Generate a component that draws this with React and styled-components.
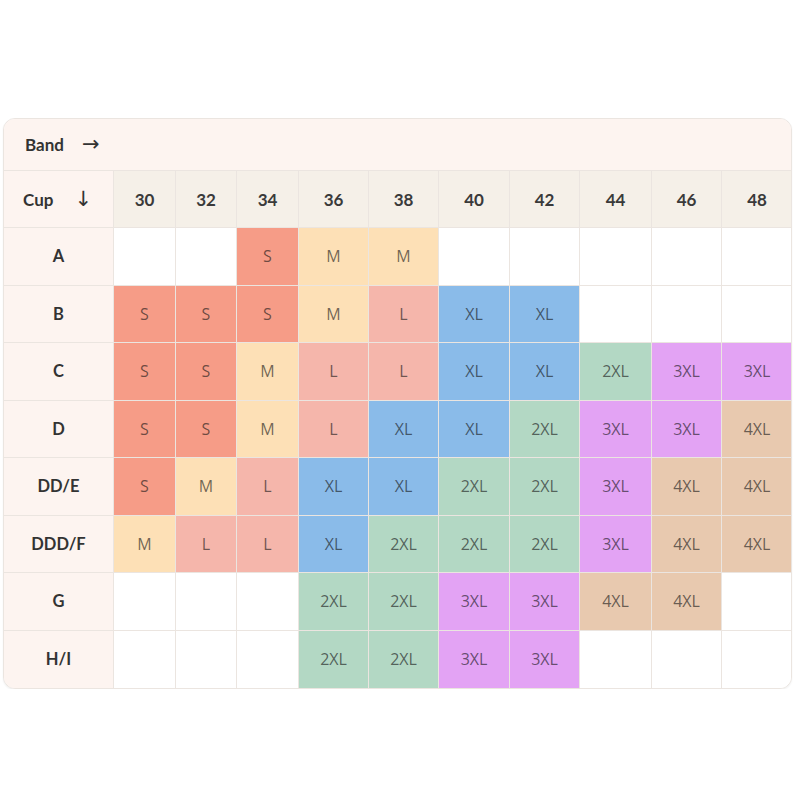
import React from "react";
import styled, { createGlobalStyle } from "styled-components";

const Global = createGlobalStyle`
  html, body { margin: 0; padding: 0; background: #ffffff; }
  body { font-family: Lato, "Open Sans", sans-serif; }
`;

const Page = styled.div`
  padding: 118px 8px 0 3px;
`;

const Card = styled.div`
  width: 789px;
  box-sizing: border-box;
  border: 1px solid #ebe5e0;
  border-radius: 12px;
  overflow: hidden;
  background: #fff;
  box-shadow: 0 1px 2px rgba(0, 0, 0, 0.06);
`;

const BandBar = styled.div`
  height: 51px;
  display: flex;
  align-items: center;
  gap: 18px;
  padding-left: 21px;
  background: #fdf4f0;
  border-bottom: 1px solid #ebe5e0;
  font-weight: 700;
  font-size: 17px;
  color: #333;
`;

const Arrow = styled.span`
  font-family: "DejaVu Sans", sans-serif;
  font-weight: 400;
  font-size: 21px;
  line-height: 1;
  color: #333;
`;

const Grid = styled.div`
  display: grid;
  grid-template-columns: 110px 62px 61px 62px 70px 70px 71px 70px 72px 70px 70px;
  grid-template-rows: 57px repeat(8, 57.5px);
`;

const Cell = styled.div`
  display: flex;
  align-items: center;
  justify-content: center;
  box-sizing: border-box;
  border-right: 1px solid #ebe5e0;
  border-bottom: 1px solid #ebe5e0;
  &:nth-child(11n) { border-right: none; }
  &:nth-last-child(-n + 11) { border-bottom: none; }
`;

const CornerCell = styled(Cell)`
  justify-content: flex-start;
  gap: 21px;
  padding-left: 19px;
  background: #fdf4f0;
  font-weight: 700;
  font-size: 17px;
  color: #333;
`;

const BandCell = styled(Cell)`
  background: #f5f0e8;
  font-weight: 700;
  font-size: 17px;
  color: #3a3a3a;
`;

const CupCell = styled(Cell)`
  background: #fdf4f0;
  font-weight: 700;
  font-size: 16.5px;
  color: #333;
`;

const COLORS = {
  S: "#f69c87",
  M: "#fde0b6",
  L: "#f5b6ab",
  XL: "#8abbe9",
  "2XL": "#b3d8c4",
  "3XL": "#e3a3f4",
  "4XL": "#e8c9af",
};

const SizeCell = styled(Cell)`
  background: ${(p) => (p.$size ? COLORS[p.$size] : "#ffffff")};
  font-family: "Open Sans", Lato, sans-serif;
  font-size: 16px;
  color: rgba(20, 20, 20, 0.62);
`;

const bands = [30, 32, 34, 36, 38, 40, 42, 44, 46, 48];

const rows = [
  ["A", ["", "", "S", "M", "M", "", "", "", "", ""]],
  ["B", ["S", "S", "S", "M", "L", "XL", "XL", "", "", ""]],
  ["C", ["S", "S", "M", "L", "L", "XL", "XL", "2XL", "3XL", "3XL"]],
  ["D", ["S", "S", "M", "L", "XL", "XL", "2XL", "3XL", "3XL", "4XL"]],
  ["DD/E", ["S", "M", "L", "XL", "XL", "2XL", "2XL", "3XL", "4XL", "4XL"]],
  ["DDD/F", ["M", "L", "L", "XL", "2XL", "2XL", "2XL", "3XL", "4XL", "4XL"]],
  ["G", ["", "", "", "2XL", "2XL", "3XL", "3XL", "4XL", "4XL", ""]],
  ["H/I", ["", "", "", "2XL", "2XL", "3XL", "3XL", "", "", ""]],
];

export default function App() {
  return (
    <Page>
      <Global />
      <Card>
        <BandBar>
          <span>Band</span>
          <Arrow>→</Arrow>
        </BandBar>
        <Grid>
          <CornerCell>
            <span>Cup</span>
            <Arrow>↓</Arrow>
          </CornerCell>
          {bands.map((b) => (
            <BandCell key={b}>{b}</BandCell>
          ))}
          {rows.map(([cup, sizes]) => (
            <React.Fragment key={cup}>
              <CupCell>{cup}</CupCell>
              {sizes.map((s, i) => (
                <SizeCell key={i} $size={s}>
                  {s}
                </SizeCell>
              ))}
            </React.Fragment>
          ))}
        </Grid>
      </Card>
    </Page>
  );
}
